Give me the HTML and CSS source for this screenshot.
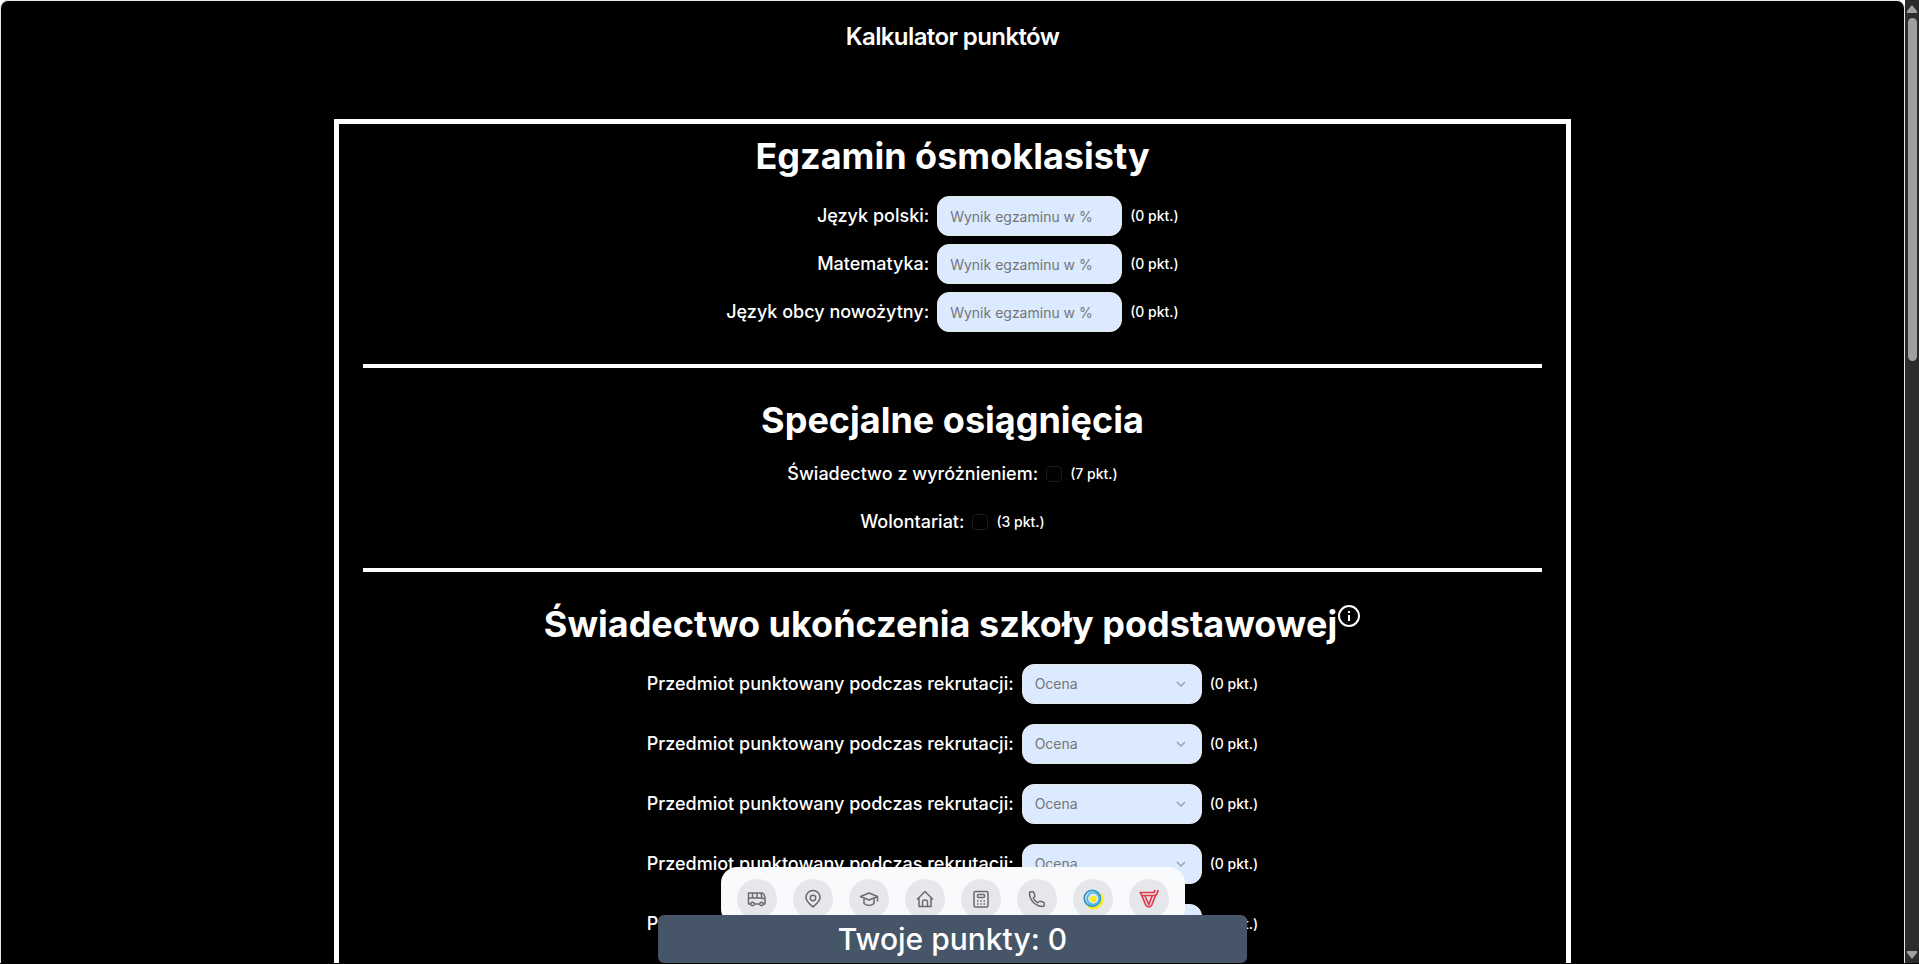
FILE: index.html
```html
<!DOCTYPE html>
<html lang="pl">
<head>
<meta charset="utf-8">
<title>Kalkulator punktów</title>
<link rel="stylesheet" href="styles.css">
</head>
<body>
<div class="window">
  <div class="page">
    <header class="header"><h1 class="title">Kalkulator punktów</h1></header>
    <main class="card">
      <section class="section">
        <h2 class="heading">Egzamin ósmoklasisty</h2>
        <div class="scores">
          <label class="label" for="polski">Język polski:</label>
          <input class="field" id="polski" type="text" placeholder="Wynik egzaminu w %">
          <span class="points">(0 pkt.)</span>
          <label class="label" for="matematyka">Matematyka:</label>
          <input class="field" id="matematyka" type="text" placeholder="Wynik egzaminu w %">
          <span class="points">(0 pkt.)</span>
          <label class="label" for="obcy">Język obcy nowożytny:</label>
          <input class="field" id="obcy" type="text" placeholder="Wynik egzaminu w %">
          <span class="points">(0 pkt.)</span>
        </div>
      </section>
      <hr class="divider">
      <section class="section">
        <h2 class="heading">Specjalne osiągnięcia</h2>
        <div class="checks">
          <div class="row"><label class="label" for="wyroznienie">Świadectwo z wyróżnieniem:</label><input class="check" id="wyroznienie" type="checkbox"><span class="points">(7 pkt.)</span></div>
          <div class="row"><label class="label" for="wolontariat">Wolontariat:</label><input class="check" id="wolontariat" type="checkbox"><span class="points">(3 pkt.)</span></div>
        </div>
      </section>
      <hr class="divider">
      <section class="section">
        <h2 class="heading">Świadectwo ukończenia szkoły podstawowej<button class="info" type="button" aria-label="Informacje"><svg width="24" height="24" viewBox="0 0 24 24" fill="none" stroke="currentColor" stroke-width="2"><circle cx="12" cy="12" r="10"/><path d="M12 11v6M12 7v2"/></svg></button></h2>
        <div class="grades">
          <div class="row"><label class="label" for="ocena1">Przedmiot punktowany podczas rekrutacji:</label><span class="picker"><select class="select" id="ocena1"><option>Ocena</option></select><svg class="chevron" width="10" height="6" viewBox="0 0 10 6"><path d="M1 1l4 4 4-4"/></svg></span><span class="points">(0 pkt.)</span></div>
          <div class="row"><label class="label" for="ocena2">Przedmiot punktowany podczas rekrutacji:</label><span class="picker"><select class="select" id="ocena2"><option>Ocena</option></select><svg class="chevron" width="10" height="6" viewBox="0 0 10 6"><path d="M1 1l4 4 4-4"/></svg></span><span class="points">(0 pkt.)</span></div>
          <div class="row"><label class="label" for="ocena3">Przedmiot punktowany podczas rekrutacji:</label><span class="picker"><select class="select" id="ocena3"><option>Ocena</option></select><svg class="chevron" width="10" height="6" viewBox="0 0 10 6"><path d="M1 1l4 4 4-4"/></svg></span><span class="points">(0 pkt.)</span></div>
          <div class="row"><label class="label" for="ocena4">Przedmiot punktowany podczas rekrutacji:</label><span class="picker"><select class="select" id="ocena4"><option>Ocena</option></select><svg class="chevron" width="10" height="6" viewBox="0 0 10 6"><path d="M1 1l4 4 4-4"/></svg></span><span class="points">(0 pkt.)</span></div>
          <div class="row"><label class="label" for="ocena5">Przedmiot punktowany podczas rekrutacji:</label><span class="picker"><select class="select" id="ocena5"><option>Ocena</option></select><svg class="chevron" width="10" height="6" viewBox="0 0 10 6"><path d="M1 1l4 4 4-4"/></svg></span><span class="points">(0 pkt.)</span></div>
        </div>
      </section>
    </main>
    <nav class="dock" aria-label="Nawigacja">
      <a class="dock-item" href="#autobusy" aria-label="Autobusy"><svg class="icon" viewBox="0 0 20 20"><path d="M3.500 15H1.500V4h13c2.200 0 3.500 3 3.500 5.500V15h-1.500M7.500 15h5M1.500 9h13M5.500 4v5M10 4v5M14 4l1 5.500h3"/><circle cx="5.500" cy="15" r="1.700"/><circle cx="14.500" cy="15" r="1.700"/></svg></a>
      <a class="dock-item" href="#mapa" aria-label="Mapa"><svg class="icon" viewBox="0 0 20 20"><path d="M10 18c-1-1.500-7-5-7-9.500a7 7 0 0 1 14 0C17 13 11 16.500 10 18z"/><circle cx="10" cy="9" r="2.700"/></svg></a>
      <a class="dock-item" href="#szkoly" aria-label="Szkoły"><svg class="icon" viewBox="0 0 20 20"><path d="M1.500 7.500L10 4l8.500 3.500L10 11zM18.500 7.500v5M5 9v5.500c2.500 2.500 7.500 2.500 10 0V9"/></svg></a>
      <a class="dock-item" href="#start" aria-label="Strona główna"><svg class="icon" viewBox="0 0 20 20"><path d="M2 10.500L10 2.500l8 8M4 9v8.500h12V9M7.500 17.500V13q0-2 2.500-2t2.500 2v4.500"/></svg></a>
      <a class="dock-item" href="#kalkulator" aria-label="Kalkulator"><svg class="icon" viewBox="0 0 20 20"><rect x="3" y="2.500" width="14" height="15.500" rx="1.500"/><rect x="6.500" y="5.500" width="7" height="3" rx="1"/><path d="M6 12h1.500M9.300 12h1.500M12.500 12H14M6 15h1.500M9.300 15h1.500M12.500 15H14"/></svg></a>
      <a class="dock-item" href="#kontakt" aria-label="Kontakt"><svg class="icon" viewBox="0 0 20 20"><path d="M3.500 2.800h2.300q.7 0 1 .8l1 3q.2.700-.3 1.200L6.300 9.200c.9 2 2.500 3.600 4.500 4.500l1.400-1.200q.5-.5 1.200-.3l3 1q.8.300.8 1v2.300q0 1-1 1C8.500 17.500 2.500 11.500 2.500 3.800q0-1 1-1z"/></svg></a>
      <a class="dock-item" href="#miasto" aria-label="Miasto"><svg class="logo" viewBox="0 0 20 20" fill="none"><path d="M17.500 5a8.800 8.800 0 0 1-12 12.500" stroke="#fdec13" stroke-width="2.600"/><circle cx="9.300" cy="9.300" r="8" stroke="#2b95cc" stroke-width="1.800"/><circle cx="10.200" cy="9.700" r="6" stroke="#4db4e6" stroke-width="1.800"/><circle cx="10.300" cy="10" r="3.200" fill="#fdec13"/></svg></a>
      <a class="dock-item" href="#szkola" aria-label="Szkoła"><svg class="logo" viewBox="0 0 20 20" fill="none" stroke="#e33b4e" stroke-width="1.700"><path d="M.5 3.500H14q1.500 0 2-2.500M3 6.500h12.500q2.500 0 3.500-5.500M1.500 3.500l5.500 13q3 3 5.500 0L16.500 6.500M6 7l3.800 8.500L13 7"/></svg></a>
    </nav>
    <div class="total" role="status">Twoje punkty: 0</div>
  </div>
  <div class="scrollbar" aria-hidden="true">
    <svg width="10" height="8" viewBox="0 0 10 8"><path d="M5 0l5 6v2H0V6z"/></svg>
    <div class="track"><div class="thumb"></div></div>
    <svg width="10" height="8" viewBox="0 0 10 8"><path d="M5 8l5-6V0H0v2z"/></svg>
  </div>
</div>
</body>
</html>
```

FILE: styles.css
```css
* { box-sizing: border-box; }
body {
  margin: 0;
  background: #000;
  color: #fff;
  font-family: Inter, "Open Sans", sans-serif;
}
h1, h2 { margin: 0; }
.window {
  display: grid;
  grid-template-columns: minmax(0, 1fr) 14px;
  height: 100vh;
  padding-bottom: 1px;
  overflow: hidden;
  background: linear-gradient(#fff 50%, #000 50%);
}
.page {
  position: relative;
  overflow: hidden;
  background: #000;
  border: 1px solid #e5e7eb;
  border-bottom: 0;
  border-radius: 8px 8px 0 0;
}
.header { padding: 20px 0 66px; text-align: center; }
.title { font-size: 24px; line-height: 32px; font-weight: 600; letter-spacing: -0.025em; }
.card {
  width: 65%;
  margin: 0 auto;
  padding: 12px 24px 80px;
  border: 5px solid #fff;
}
.heading {
  margin-bottom: 20px;
  font-size: 36px;
  line-height: 40px;
  font-weight: 700;
  text-align: center;
}
.divider { margin: 32px 0; border: 0; height: 4px; background: #fff; }
.label { font-size: 18px; line-height: 28px; font-weight: 500; }
.points { font-size: 14px; line-height: 20px; font-weight: 500; }
.scores {
  display: grid;
  grid-template-columns: auto 185px auto;
  justify-content: center;
  align-items: center;
  gap: 8px;
}
.scores .label { text-align: right; }
.row { display: flex; justify-content: center; align-items: center; gap: 8px; }
.checks { display: grid; gap: 20px; }
.grades { display: grid; gap: 20px; }
.field, .select {
  height: 40px;
  margin: 0;
  border: 1px solid #e5e7eb;
  border-radius: 12px;
  background: #dbeafe;
  color: #757575;
  font-family: inherit;
  font-size: 14px;
}
.field { width: 100%; padding: 0 12px; }
.field::placeholder { color: #757575; opacity: 1; }
.picker { position: relative; display: block; width: 180px; }
.select { width: 100%; padding: 0 12px 1px; appearance: none; }
.chevron {
  position: absolute;
  top: 17px;
  right: 16px;
  fill: none;
  stroke: #9ca3af;
  stroke-width: 1.5;
  pointer-events: none;
}
.check {
  appearance: none;
  width: 16px;
  height: 16px;
  margin: 0;
  border: 1px solid #1c1c1c;
  border-radius: 4px;
}
.info {
  height: 24px;
  padding: 0;
  border: 0;
  background: none;
  color: inherit;
  vertical-align: top;
}
.info svg { display: block; }
.dock {
  position: absolute;
  bottom: 38px;
  left: 50%;
  transform: translateX(-50%);
  display: flex;
  gap: 16px;
  padding: 12px 16px 6px;
  border-radius: 16px;
  background: #f9fafb;
}
.dock-item {
  display: flex;
  align-items: center;
  justify-content: center;
  width: 40px;
  height: 40px;
  border-radius: 50%;
  background: #e5e7eb;
  color: #6b6b6b;
}
.icon { width: 20px; height: 20px; fill: none; stroke: currentColor; stroke-width: 1.5; stroke-linejoin: round; }
.logo { width: 20px; height: 20px; }
.total {
  position: absolute;
  bottom: 0;
  left: 50%;
  width: 31%;
  transform: translateX(-50%);
  border-radius: 6px;
  background: #475569;
  font-size: 30px;
  line-height: 48px;
  font-weight: 500;
  text-align: center;
}
.scrollbar {
  display: flex;
  flex-direction: column;
  align-items: center;
  gap: 5px;
  padding: 5px 0 4px;
  background: #2c2c2c;
}
.scrollbar svg { fill: #9f9f9f; }
.track { flex: 1; align-self: stretch; padding: 0 2px 0 3px; }
.thumb { height: 37%; border-radius: 5px; background: #9f9f9f; }
```
